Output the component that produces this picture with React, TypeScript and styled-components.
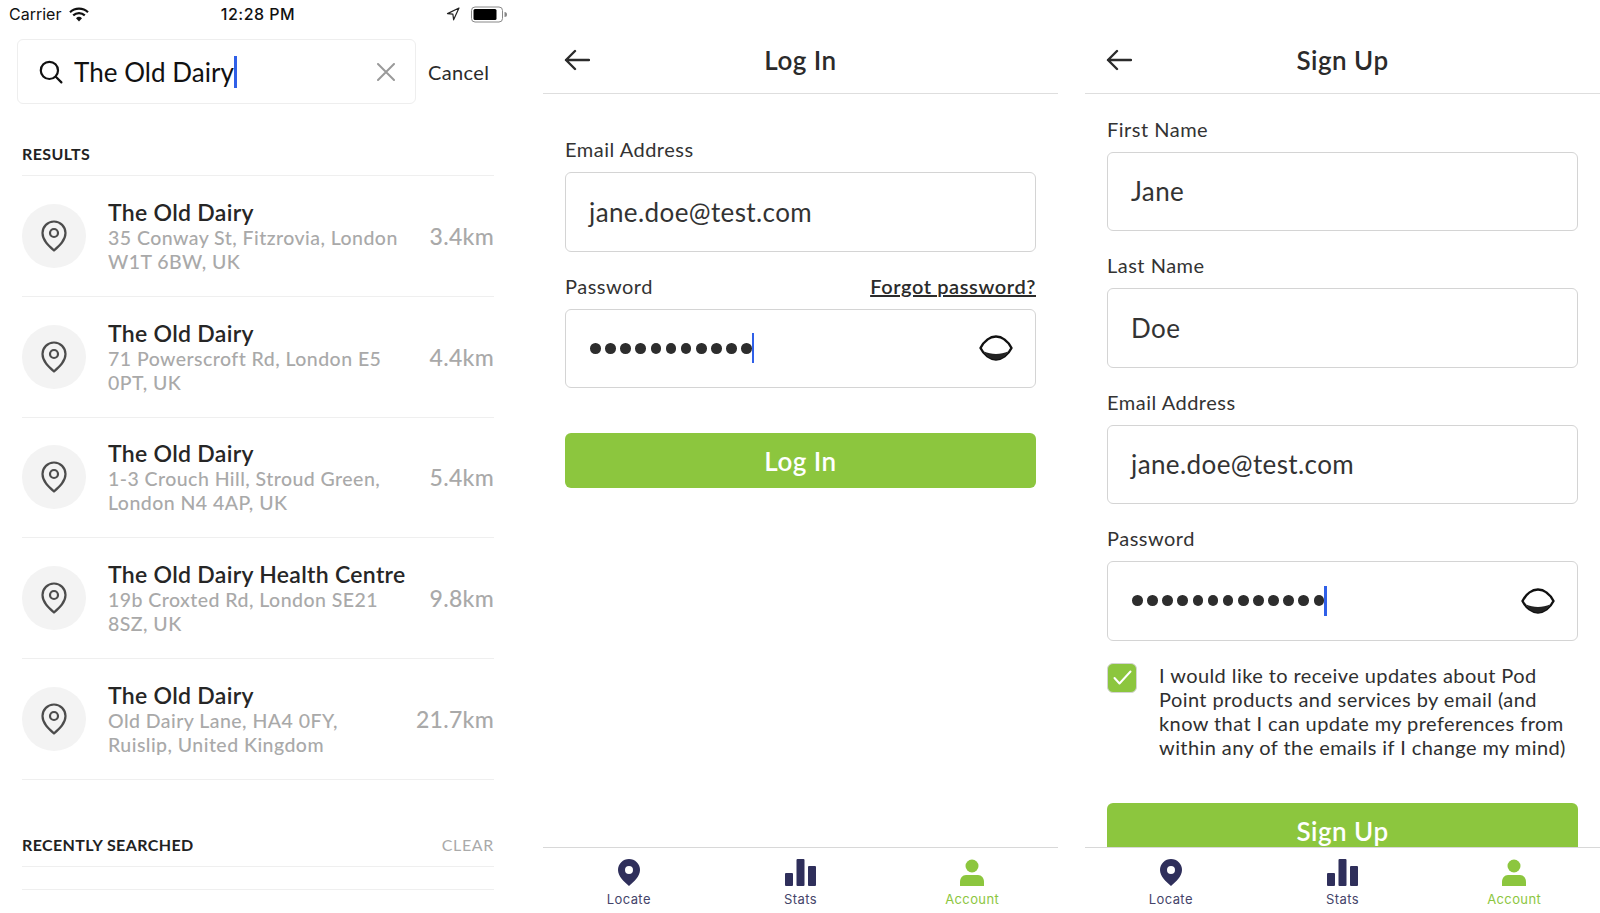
import { createGlobalStyle, styled } from "styled-components"

const GREEN = "#8cc63e"
const NAVY = "#2f2f5b"
const INK = "#2b2b2b"

const Global = createGlobalStyle`
    * { box-sizing: border-box; }
    html, body { margin: 0; padding: 0; background: #fff; }
    body { font-family: "Lato", "Noto Sans", sans-serif; color: ${INK}; overflow: hidden; }
`

const Page = styled.div`
    display: flex;
    width: 1600px;
    height: 913px;
`
const Screen = styled.section<{ $left?: number }>`
    display: flex;
    flex-direction: column;
    flex: none;
    width: ${(p) => (p.$left ? 515 : 518)}px;
    height: 913px;
    margin-left: ${(p) => p.$left ?? 0}px;
    overflow: hidden;
`

/* status bar + search */
const StatusBar = styled.div`
    display: grid;
    grid-template-columns: 1fr auto 1fr;
    align-items: center;
    height: 28px;
    padding: 0 11px 0 9px;
    font-family: "Inter", "Liberation Sans", sans-serif;
    font-size: 16px;
    color: #111;
`
const StatusSide = styled.div<{ $end?: boolean }>`
    display: flex;
    align-items: center;
    justify-content: ${(p) => (p.$end ? "flex-end" : "flex-start")};
    gap: ${(p) => (p.$end ? 11 : 8)}px;
`
const Time = styled.div`
    font-weight: 500;
    letter-spacing: 0.5px;
`
const SearchRow = styled.div`
    display: flex;
    align-items: center;
    height: 65px;
    margin: 11px 0 0 17px;
`
const SearchBox = styled.div`
    display: flex;
    align-items: center;
    width: 399px;
    height: 100%;
    padding: 0 20px 0 21px;
    border: 1px solid #eeeeee;
    border-radius: 6px;
    font-size: 26px;
    color: #111;
`
const SearchText = styled.span`
    margin-left: 11px;
    flex: 1;
    display: flex;
    align-items: center;
    letter-spacing: 0.05px;
`
const Caret = styled.span<{ $height: number }>`
    display: inline-block;
    width: 2.5px;
    height: ${(p) => p.$height}px;
    background: #3060e8;
`
const CancelLink = styled.span`
    margin-left: 12px;
    font-size: 20px;
    letter-spacing: 0.35px;
`
const Results = styled.div`
    display: flex;
    flex-direction: column;
    width: 472px;
    margin-left: 22px;
`
const SectionHead = styled.div<{ $height: number }>`
    display: flex;
    justify-content: space-between;
    align-items: flex-end;
    height: ${(p) => p.$height}px;
    padding-bottom: 12px;
    border-bottom: 1px solid #efefef;
    font-size: 16px;
    line-height: 18px;
    font-weight: 700;
    letter-spacing: 0.4px;
    color: #222;
`
const ClearLink = styled.span`
    font-weight: 400;
    letter-spacing: 0.65px;
    color: #aaa;
`
const ResultRow = styled.div`
    display: flex;
    align-items: center;
    height: 120.8px;
    border-bottom: 1px solid #efefef;
`
const PinCircle = styled.div`
    display: flex;
    align-items: center;
    justify-content: center;
    flex: none;
    width: 64px;
    height: 64px;
    border-radius: 50%;
    background: #f3f3f3;
`
const ResultBody = styled.div`
    flex: 1;
    margin-left: 22px;
`
const ResultTitle = styled.div`
    font-size: 23px;
    font-weight: 600;
    line-height: 28px;
    letter-spacing: 0.3px;
    color: #262626;
`
const ResultAddress = styled.div`
    font-size: 19.5px;
    font-weight: 500;
    line-height: 24px;
    letter-spacing: 0.45px;
    color: #a9a9a9;
    white-space: pre-line;
`
const Distance = styled.div`
    font-size: 23px;
    font-weight: 500;
    letter-spacing: 0.3px;
    color: #a9a9a9;
`
const EmptyRow = styled.div`
    height: 23px;
    border-bottom: 1px solid #efefef;
`

/* forms */
const Header = styled.header`
    display: flex;
    align-items: center;
    justify-content: center;
    flex: none;
    position: relative;
    height: 94px;
    padding-top: 26px;
    border-bottom: 1px solid #dedede;
    font-size: 26px;
    font-weight: 600;
    letter-spacing: 0.5px;
    color: #2b2b2b;
`
const BackButton = styled.span`
    position: absolute;
    left: 21px;
    top: 49px;
    display: flex;
`
const FormArea = styled.div<{ $top: number }>`
    flex: 1;
    min-height: 0;
    overflow: hidden;
    display: flex;
    flex-direction: column;
    padding: ${(p) => p.$top}px 22px 0;
`
const LabelRow = styled.div`
    display: flex;
    justify-content: space-between;
    align-items: center;
    height: 24px;
    margin-bottom: 11px;
    font-size: 20px;
    letter-spacing: 0.5px;
    color: #333;
`
const ForgotLink = styled.span`
    font-weight: 600;
    letter-spacing: 0.6px;
    text-decoration: underline;
    color: #2b2b2b;
`
const Field = styled.div`
    display: flex;
    align-items: center;
    flex: none;
    height: 79.5px;
    margin-bottom: 22px;
    padding: 0 22px 0 23px;
    border: 1.5px solid #d4d4d4;
    border-radius: 6px;
    font-size: 26px;
    letter-spacing: 0.4px;
    color: #333;
`
const Dots = styled.div`
    flex: 1;
    display: flex;
    align-items: center;
    gap: 4.45px;
    padding-left: 1px;
`
const Dot = styled.span`
    width: 10.7px;
    height: 10.7px;
    border-radius: 50%;
    background: #2d2d2d;
`
const PrimaryButton = styled.div<{ $top: number }>`
    display: flex;
    align-items: center;
    justify-content: center;
    flex: none;
    height: 55px;
    margin-top: ${(p) => p.$top}px;
    border-radius: 6px;
    background: ${GREEN};
    font-size: 26px;
    font-weight: 600;
    letter-spacing: 0.5px;
    color: #fff;
`
const ConsentRow = styled.div`
    display: flex;
    flex: none;
    gap: 22px;
`
const CheckBox = styled.span`
    display: flex;
    align-items: center;
    justify-content: center;
    flex: none;
    width: 30px;
    height: 30px;
    border: 1.5px solid #d4d4d4;
    border-radius: 6px;
    background: ${GREEN};
`
const ConsentText = styled.p`
    margin: 0;
    font-size: 20px;
    line-height: 24px;
    letter-spacing: 0.42px;
    color: #2f2f2f;
    white-space: pre-line;
`

/* tab bar */
const TabBar = styled.nav`
    display: grid;
    grid-template-columns: repeat(3, 1fr);
    flex: none;
    height: 66px;
    border-top: 1px solid #d8d8d8;
    background: #fff;
`
const Tab = styled.div<{ $active?: boolean }>`
    display: flex;
    flex-direction: column;
    align-items: center;
    justify-content: flex-end;
    padding-bottom: 6px;
    font-family: "Inter", "Liberation Sans", sans-serif;
    font-size: 13px;
    letter-spacing: 0.4px;
    line-height: 16px;
    color: ${(p) => (p.$active ? GREEN : "#44446a")};
    > svg { margin-bottom: 5px; }
`

function Wifi() {
    return (
        <svg width="20" height="15" viewBox="0 0 20 15">
            <path d="M1 5.2a13 13 0 0 1 18 0" fill="none" stroke="#111" strokeWidth="2.2" />
            <path d="M4.2 8.4a8.6 8.6 0 0 1 11.6 0" fill="none" stroke="#111" strokeWidth="2.2" />
            <path d="M7 11.2a4.4 4.4 0 0 1 6 0L10 14.4z" fill="#111" />
        </svg>
    )
}

function Arrow() {
    return (
        <svg width="14" height="14" viewBox="0 0 14 14">
            <path d="M13 1 1.5 6.6l5.4.6.7 5.6z" fill="none" stroke="#222" strokeWidth="1.2" strokeLinejoin="round" />
        </svg>
    )
}

function Battery() {
    return (
        <svg width="36" height="17" viewBox="0 0 36 17">
            <rect x="0.5" y="1" width="31" height="15" rx="3.5" fill="none" stroke="#888" />
            <rect x="2.5" y="3" width="23" height="11" rx="1.5" fill="#000" />
            <path d="M33.5 6v5a2.5 2.5 0 0 0 0-5z" fill="#888" />
        </svg>
    )
}

function SearchIcon() {
    return (
        <svg width="24" height="24" viewBox="0 0 24 24" fill="none" stroke="#111" strokeWidth="2.2" strokeLinecap="round">
            <circle cx="10.4" cy="10.4" r="8.6" />
            <path d="m16.8 16.8 5.6 5.6" />
        </svg>
    )
}

function CloseIcon() {
    return (
        <svg width="18" height="18" viewBox="0 0 18 18" stroke="#9a9a9a" strokeWidth="2" strokeLinecap="round">
            <path d="M1 1l16 16M17 1 1 17" />
        </svg>
    )
}

function PinOutline() {
    return (
        <svg width="26" height="32" viewBox="0 0 26 32" fill="none" stroke="#4c4c4c" strokeWidth="2.2">
            <path d="M13 30.5C8 26 1.5 20.5 1.5 13a11.5 11.5 0 0 1 23 0c0 7.5-6.5 13-11.5 17.5z" strokeLinejoin="round" />
            <circle cx="13" cy="13" r="4" />
        </svg>
    )
}

function BackArrow() {
    return (
        <svg width="26" height="22" viewBox="0 0 26 22" fill="none" stroke="#2b2b2b" strokeWidth="2.4" strokeLinecap="round" strokeLinejoin="round">
            <path d="M25 11H2M11 2l-9 9 9 9" />
        </svg>
    )
}

function EyeIcon() {
    return (
        <svg width="34" height="26" viewBox="0 0 34 26">
            <path d="M1.5 13C5 6 11 1.5 17 1.5S29 6 32.5 13C29 20 23 24.5 17 24.500S5 20 1.500 13z" fill="none" stroke="#111" strokeWidth="2.4" strokeLinejoin="round" />
            <path d="M5 16.500c7 3.200 17 3.200 24 0C26 21.500 21.500 24.500 17 24.500S8 21.500 5 16.500z" fill="#222" />
        </svg>
    )
}

function CheckMark() {
    return (
        <svg width="19" height="15" viewBox="0 0 19 15" fill="none" stroke="#fff" strokeWidth="2" strokeLinecap="round" strokeLinejoin="round">
            <path d="M1.5 8l5 5.5L17.5 1.5" />
        </svg>
    )
}

function LocateIcon() {
    return (
        <svg width="22" height="27" viewBox="0 0 22 27">
            <path fillRule="evenodd" d="M11 27C6 22.5 0 17.5 0 11a11 11 0 0 1 22 0c0 6.5-6 11.5-11 16zM11 7a4 4 0 1 0 0 8 4 4 0 0 0 0-8z" fill={NAVY} />
        </svg>
    )
}

function StatsIcon() {
    return (
        <svg width="31" height="27" viewBox="0 0 31 27" fill={NAVY}>
            <rect x="0" y="14" width="8" height="13" rx="1" />
            <rect x="11.5" y="0" width="8" height="27" rx="1" />
            <rect x="23" y="7" width="8" height="20" rx="1" />
        </svg>
    )
}

function AccountIcon() {
    return (
        <svg width="24" height="27" viewBox="0 0 24 27" fill={GREEN}>
            <circle cx="12" cy="7" r="6.5" />
            <path d="M0 27v-4c0-4 2.5-7 6-7h12c3.5 0 6 3 6 7v4z" />
        </svg>
    )
}

function BottomTabs() {
    return (
        <TabBar>
            <Tab><LocateIcon />Locate</Tab>
            <Tab><StatsIcon />Stats</Tab>
            <Tab $active><AccountIcon />Account</Tab>
        </TabBar>
    )
}

const PasswordCaret = styled(Caret)`
    margin-left: -4.5px;
`

function PasswordField({ count }: { count: number }) {
    return (
        <Field>
            <Dots>
                {Array.from({ length: count }, (_, i) => <Dot key={i} />)}
                <PasswordCaret $height={30} />
            </Dots>
            <EyeIcon />
        </Field>
    )
}

const results = [
    { title: "The Old Dairy", address: "35 Conway St, Fitzrovia, London\nW1T 6BW, UK", km: "3.4km" },
    { title: "The Old Dairy", address: "71 Powerscroft Rd, London E5\n0PT, UK", km: "4.4km" },
    { title: "The Old Dairy", address: "1-3 Crouch Hill, Stroud Green,\nLondon N4 4AP, UK", km: "5.4km" },
    { title: "The Old Dairy Health Centre", address: "19b Croxted Rd, London SE21\n8SZ, UK", km: "9.8km" },
    { title: "The Old Dairy", address: "Old Dairy Lane, HA4 0FY,\nRuislip, United Kingdom", km: "21.7km" },
]

export default function App() {
    return (
        <Page>
            <Global />
            <Screen>
                <StatusBar>
                    <StatusSide>Carrier <Wifi /></StatusSide>
                    <Time>12:28 PM</Time>
                    <StatusSide $end><Arrow /><Battery /></StatusSide>
                </StatusBar>
                <SearchRow>
                    <SearchBox>
                        <SearchIcon />
                        <SearchText>The Old Dairy<Caret $height={32} /></SearchText>
                        <CloseIcon />
                    </SearchBox>
                    <CancelLink>Cancel</CancelLink>
                </SearchRow>
                <Results>
                    <SectionHead $height={72}>RESULTS</SectionHead>
                    {results.map((r, i) => (
                        <ResultRow key={i}>
                            <PinCircle><PinOutline /></PinCircle>
                            <ResultBody>
                                <ResultTitle>{r.title}</ResultTitle>
                                <ResultAddress>{r.address}</ResultAddress>
                            </ResultBody>
                            <Distance>{r.km}</Distance>
                        </ResultRow>
                    ))}
                    <SectionHead $height={87}>
                        <span>RECENTLY SEARCHED</span>
                        <ClearLink>CLEAR</ClearLink>
                    </SectionHead>
                    <EmptyRow />
                </Results>
            </Screen>

            <Screen $left={25}>
                <Header>
                    <BackButton><BackArrow /></BackButton>
                    Log In
                </Header>
                <FormArea $top={43}>
                    <LabelRow>Email Address</LabelRow>
                    <Field>jane.doe@test.com</Field>
                    <LabelRow>
                        Password
                        <ForgotLink>Forgot password?</ForgotLink>
                    </LabelRow>
                    <PasswordField count={11} />
                    <PrimaryButton $top={23}>Log In</PrimaryButton>
                </FormArea>
                <BottomTabs />
            </Screen>

            <Screen $left={27}>
                <Header>
                    <BackButton><BackArrow /></BackButton>
                    Sign Up
                </Header>
                <FormArea $top={22.5}>
                    <LabelRow>First Name</LabelRow>
                    <Field>Jane</Field>
                    <LabelRow>Last Name</LabelRow>
                    <Field>Doe</Field>
                    <LabelRow>Email Address</LabelRow>
                    <Field>jane.doe@test.com</Field>
                    <LabelRow>Password</LabelRow>
                    <PasswordField count={13} />
                    <ConsentRow>
                        <CheckBox><CheckMark /></CheckBox>
                        <ConsentText>{"I would like to receive updates about Pod\nPoint products and services by email (and\nknow that I can update my preferences from\nwithin any of the emails if I change my mind)"}</ConsentText>
                    </ConsentRow>
                    <PrimaryButton $top={44.5}>Sign Up</PrimaryButton>
                </FormArea>
                <BottomTabs />
            </Screen>
        </Page>
    )
}
